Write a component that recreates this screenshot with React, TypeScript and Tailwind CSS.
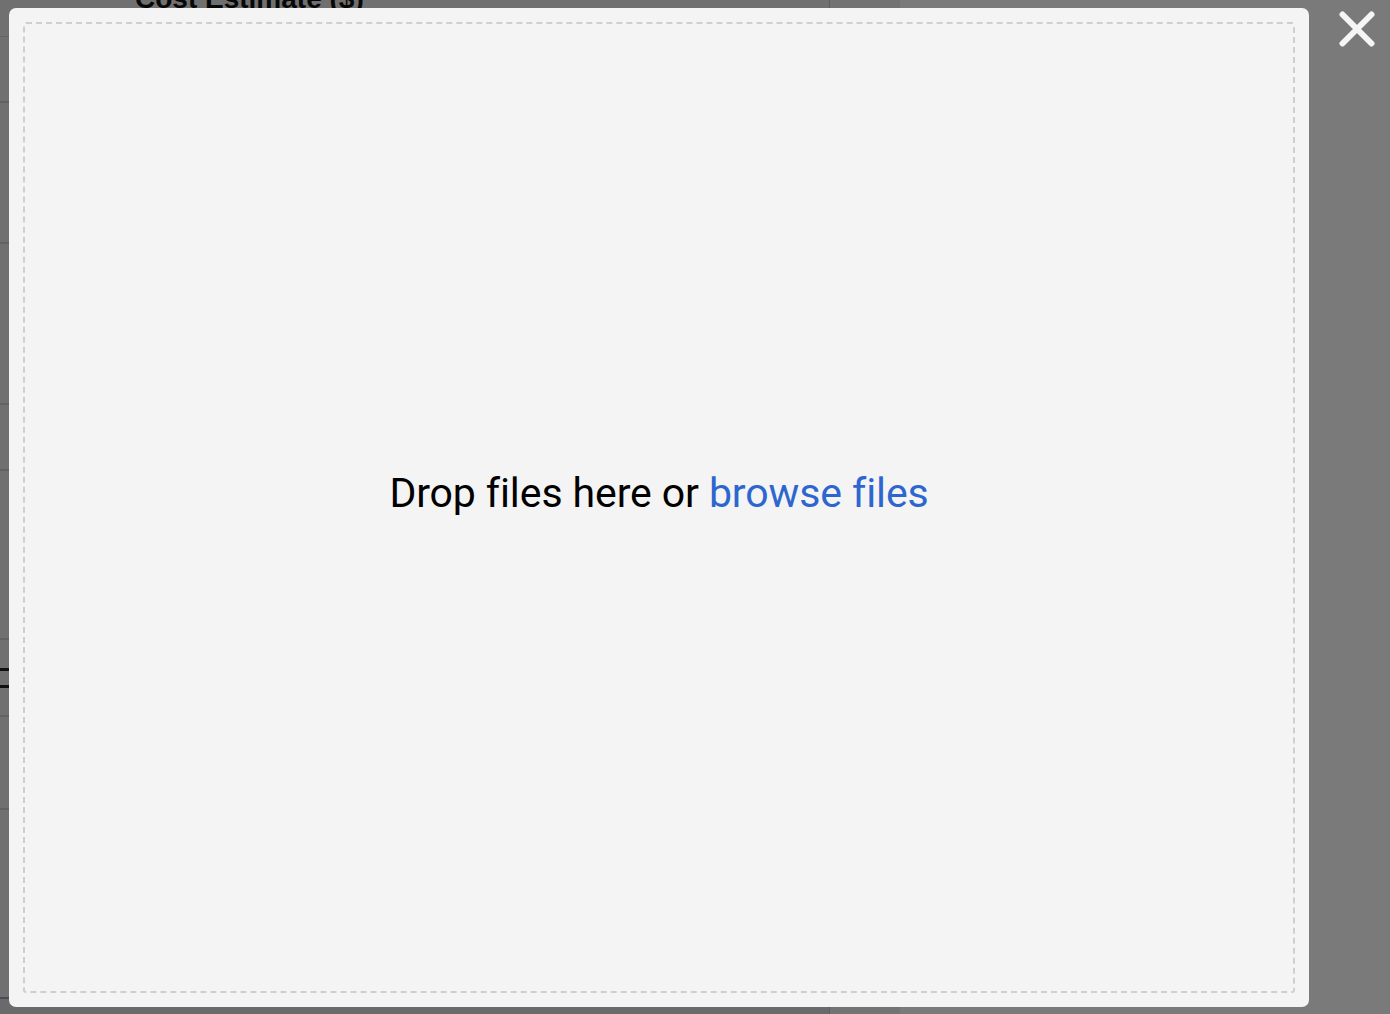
import React from "react";

const rows = [
  { h: "h-[66px]" },
  { h: "h-[141px]" },
  { h: "h-[161px]" },
  { h: "h-[66px]" },
  { h: "h-[169px]" },
];

export default function App() {
  return (
    <div className="relative w-full h-[1014px] overflow-hidden bg-white font-['Roboto','Liberation_Sans',sans-serif]">
      {/* Page underneath the modal */}
      <div className="flex h-full">
        <div className="w-[829px] bg-[#e0e0e0] flex flex-col">
          <div className="h-[37px] border-b border-[#c8c8c8] pl-[135px]">
            <div className="-mt-[17px] text-[28px] leading-[32px] font-bold text-[#111] font-['Liberation_Sans',Arial,sans-serif]">
              Cost Estimate ($)
            </div>
          </div>
          {rows.map((r, i) => (
            <div key={i} className={`${r.h} border-b-2 border-[#c4c4c4]`} />
          ))}
          <div className="h-[31px] border-b-[3px] border-[#222]" />
          <div className="h-[17px] border-b-[3px] border-[#222]" />
          <div className="h-[29px] border-b-2 border-[#c4c4c4]" />
          <div className="h-[93px] border-b-2 border-[#c4c4c4]" />
          <div className="h-[189px] border-b-2 border-[#8a9ab4]" />
          <div className="flex-1 bg-[#d4d4d4]" />
        </div>
        <div className="w-px bg-[#b4bcd0]" />
        <div className="w-[70px] bg-[#e6e6e6]" />
        <div className="flex-1 bg-[#f4f4f4]" />
      </div>

      {/* Overlay */}
      <div className="absolute inset-0 bg-black/50" />

      {/* Modal */}
      <div className="absolute left-[9px] top-[8px] w-[1300px] h-[999px] rounded-[7px] bg-[#f4f4f4] p-[14px]">
        <div className="h-full rounded-[3px] border-2 border-dashed border-[#cfcfcf] flex items-center justify-center pb-[30px]">
          <p className="text-[41px] leading-[48px] text-black tracking-[-0.1px]">
            Drop files here or{" "}
            <button className="text-[#2d66cf] cursor-pointer">browse files</button>
          </p>
        </div>
      </div>

      {/* Close */}
      <button className="absolute right-[14px] top-[10px] w-[38px] h-[38px] flex items-center justify-center" aria-label="Close">
        <svg width="36" height="36" viewBox="0 0 36 36" fill="none">
          <path d="M3.5 3.5 L32.5 32.5 M32.5 3.5 L3.5 32.5" stroke="#f6f6f6" strokeWidth="6" strokeLinecap="round" />
        </svg>
      </button>
    </div>
  );
}
